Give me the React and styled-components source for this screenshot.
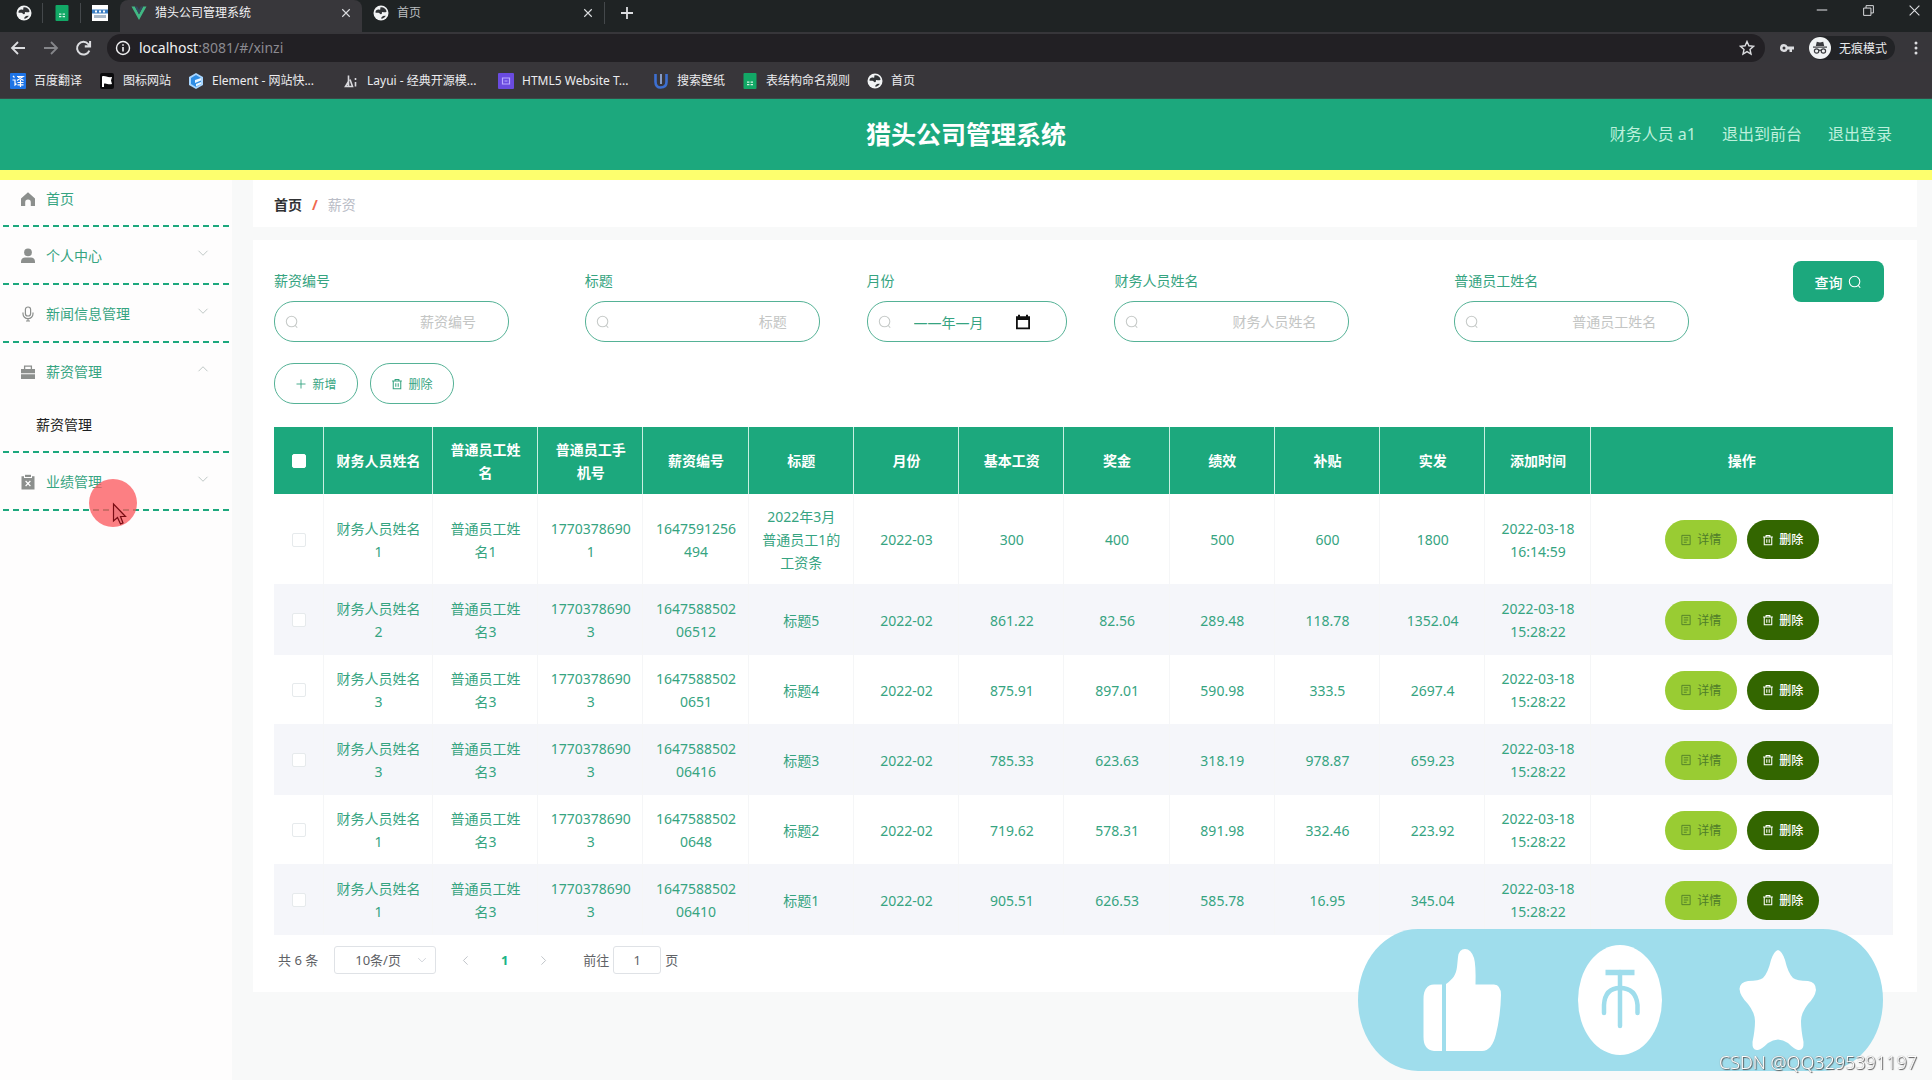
import React, { useState } from "react";
import styled, { createGlobalStyle, css } from "styled-components";

const GREEN = "#1ca87d";
const TEXT_GREEN = "#36a481";

const GlobalStyle = createGlobalStyle`
  * { box-sizing: border-box; }
  body {
    margin: 0;
    background: #f8f9f9;
    font-family: "Noto Sans", "Noto Sans CJK SC", sans-serif;
    font-size: 14px;
    color: #303133;
  }
  button, input, select { font: inherit; color: inherit; margin: 0; }
  button { cursor: pointer; }
`;

/* ---------- icons ---------- */

const Svg = ({ size = 14, box = 16, children, ...rest }) => (
  <svg width={size} height={size} viewBox={`0 0 ${box} ${box}`} fill="none" stroke="currentColor" strokeWidth="1.2" aria-hidden="true" {...rest}>
    {children}
  </svg>
);

const SearchIcon = ({ size }) => (
  <Svg size={size}>
    <circle cx="7.5" cy="7.5" r="6" />
    <path d="M11.6 11.8 L14 14.6" />
  </Svg>
);
const PlusIcon = ({ size = 12, width = 1.2 }) => (
  <Svg size={size} strokeWidth={width}><path d="M8 2v12M2 8h12" /></Svg>
);
const TrashIcon = ({ size = 12 }) => (
  <Svg size={size} strokeWidth="1.4"><path d="M1.5 4h13M5.5 4V2h5v2M3 4v10.2h10V4M6.4 7v4.6M9.6 7v4.6" /></Svg>
);
const DocIcon = ({ size = 12 }) => (
  <Svg size={size}><path d="M2.5 1.8h11v12.4h-11zM5 5h6M5 8h6M5 11h4" /></Svg>
);
const ChevronIcon = ({ dir = "down", size = 12 }) => {
  const d = { down: "M2 5l6 6 6-6", up: "M2 11l6-6 6 6", left: "M11 2L5 8l6 6", right: "M5 2l6 6-6 6" }[dir];
  return <Svg size={size}><path d={d} /></Svg>;
};
const HomeIcon = () => (
  <Svg size={16} fill="currentColor" stroke="none"><path d="M8 1.2 15 7.4V15h-4.2v-3.6a2.8 2.8 0 0 0-5.6 0V15H1V7.4z" /></Svg>
);
const UserIcon = () => (
  <Svg size={16} fill="currentColor" stroke="none"><circle cx="8" cy="4.4" r="3.9" /><path d="M1 15v-1.6C1 11 3 9.6 5 9.6h6c2 0 4 1.4 4 3.8V15z" /></Svg>
);
const MicIcon = () => (
  <Svg size={16}><rect x="5.4" y="1" width="5.2" height="9" rx="2.6" /><path d="M3 6.5v1.2a5 5 0 0 0 10 0V6.5M8 12.7V15M6 15h4" /></Svg>
);
const CaseIcon = () => (
  <Svg size={16} fill="currentColor" stroke="none"><path d="M1 5h14v4.200H1zM1 10.2h14V15H1z" /><path d="M4.6 5V2.200h6.8V5" fill="none" stroke="currentColor" strokeWidth="1.3" /></Svg>
);
const ClipIcon = () => (
  <Svg size={16} fill="currentColor" stroke="none">
    <path d="M1.5 2.2H4V4h8V2.2h2.5V15.5h-13z" /><path d="M5 .8h6V3H5z" />
    <path d="M5.6 7l4.8 5M10.4 7l-4.8 5" stroke="#fff" strokeWidth="1.2" />
  </Svg>
);
const CalendarIcon = () => (
  <Svg size={16} fill="#111" stroke="none"><path d="M1 2.2h2V.8h2v1.4h6V.8h2v1.4h2v13H1zM2.8 6v7.4h10.4V6z" fillRule="evenodd" /></Svg>
);
const GlobeIcon = () => (
  <Svg size={16} stroke="none"><circle cx="8" cy="8" r="7.5" fill="#f1f3f4" /><path d="M7.6 2.2c2.8-.4 5.6 1.4 6 4.2-1.6 1.8-3 .4-4.2.6-1.2.4.4 1.8-1.4 2.2-1 .2-1.4-1.2-2.6-1.4-.8-.2-2.2 0-3-.4.2-1.6 1-2.2 2-2.6 1.6-.6 2 .4 2.8-.4.6-.6-.4-1.2.4-2.2zM8.4 13.800c-.4-1.2.2-1.6 1-2.2.8-.8 2-.6 3.4-.8-1 1.8-2.4 2.8-4.4 3z" fill="#303336" /></Svg>
);
const SheetIcon = () => (
  <Svg size={16} stroke="none"><rect x="1.5" y="0" width="13" height="16" rx="1" fill="#12a866" /><path d="M5 8.500h2.400v1.200H5zM8.600 8.500H11v1.200H8.600zM5 11h2.400v1.200H5zM8.600 11H11v1.200H8.600z" fill="#d6f5e4" /></Svg>
);
const SiteIcon = () => (
  <Svg size={16} stroke="none"><rect width="16" height="16" fill="#fff" /><path d="M0 4.500h16v4H0z" fill="#3b7fc4" /><path d="M2 10h12v3H2z" fill="#a9b9c9" /><path d="M3 5.500h2v2H3zM7 5.500h2v2H7zM11 5.500h2v2h-2z" fill="#fff" /></Svg>
);
const VueIcon = () => (
  <Svg size={16} stroke="none"><path d="M.5 1.500h3.300L8 9.300l4.200-7.800h3.300L8 15z" fill="#41b883" /><path d="M3.800 1.500h2.400L8 5l1.800-3.500h2.400L8 9.300z" fill="#35495e" /></Svg>
);
const TranslateIcon = () => (
  <Svg size={16} stroke="#fff" strokeWidth="1.2"><rect width="16" height="16" rx="1" fill="#1e74e6" stroke="none" /><path d="M3 3l1.500 1.500M2.500 7H5v5l1.500-1.300M7 3.500h6L7 7.500M8 4l5.500 3.500M7.500 9.500h6M10.500 7v7M7.500 11.800h6" /></Svg>
);
const FlagIcon = () => (
  <Svg size={16} stroke="none"><rect x="1" width="14" height="16" rx="2" fill="#0b0b0d" /><path d="M3 3.500c3-1.600 4.500 1.400 10 .6l-1 3.400 1 3.600c-4 1-5.500-1.200-8-.4V14H3z" fill="#fff" /></Svg>
);
const ElementIcon = () => (
  <Svg size={16} stroke="none"><path d="M8 0l7 4v8l-7 4-7-4V4z" fill="#a8d6ff" /><path d="M8 2l5 3v6l-5 3-5-3V5z" fill="#2f8de4" /><path d="M7 7l6-2v2.500L7 10zM8 11l5-2v2l-5 2.500z" fill="#e9f5ff" /></Svg>
);
const LayuiIcon = () => (
  <Svg size={16} stroke="#d8d8dc" strokeWidth="1.6"><path d="M5.500 2.500v11M7 6.500l2.500 7H2.500l3-5M12.500 9v4.500M12.500 5v2" /></Svg>
);
const Html5Icon = () => (
  <Svg size={16} stroke="#b9a9ff" strokeWidth="1.2"><rect width="16" height="16" rx="1" fill="#6a4be0" stroke="none" /><path d="M4.500 5h7v6h-7zM6.500 8h3" /></Svg>
);
const WallIcon = () => (
  <Svg size={16} stroke="#3d6fd0" strokeWidth="2.6"><path d="M2.500 1v8c0 3.500 2 5.500 5 5.500s6-1.500 6-5.500V1" /><path d="M8 1v10" stroke="#9db6e6" strokeWidth="1.6" /></Svg>
);
const CloseIcon = ({ size = 10, width = 1.8 }) => (
  <Svg size={size} strokeWidth={width}><path d="M2 2l12 12M14 2L2 14" /></Svg>
);
const IncognitoIcon = () => (
  <Svg size={22} box={22} stroke="none"><circle cx="11" cy="11" r="11" fill="#f1f3f4" /><path d="M7.800 4.800l3.200.6 3.200-.6 1 4.200H6.800z" fill="#3a3b3f" /><path d="M4 9.500h14v1.200H4z" fill="#3a3b3f" /><g fill="none" stroke="#3a3b3f" strokeWidth="1.2"><circle cx="7.6" cy="14" r="2.2" /><circle cx="14.4" cy="14" r="2.2" /><path d="M9.800 13.600q1.200-.8 2.400 0" /></g></Svg>
);

/* ---------- browser frame ---------- */

const TabStrip = styled.div`
  display: flex;
  align-items: center;
  height: 32px;
  background: #1f2324;
  color: #c9cbce;
  font-size: 12px;
`;
const IconTab = styled.button`
  display: flex;
  align-items: center;
  justify-content: center;
  width: 38px;
  height: 20px;
  padding: 0;
  border: 0;
  border-right: ${(p) => (p.$last ? "0" : "1px solid #44484b")};
  background: none;
  margin-bottom: 7px;
`;
const PinnedTabs = styled.div`
  display: flex;
  padding: 0 0 0 5px;
  width: 120px;
`;
const Tab = styled.div`
  display: flex;
  align-items: center;
  gap: 8px;
  width: 242px;
  height: 32px;
  padding: 0 11px 7px;
  border-radius: 8px 8px 0 0;
  background: ${(p) => (p.$active ? "#38373b" : "transparent")};
  color: ${(p) => (p.$active ? "#f1f1f3" : "#b9bcbf")};
`;
const TabTitle = styled.span`
  flex: 1;
  line-height: 18px;
  white-space: nowrap;
`;
const ChromeButton = styled.button`
  display: flex;
  align-items: center;
  justify-content: center;
  width: ${(p) => p.$width || 16}px;
  height: 22px;
  padding: 0;
  border: 0;
  background: none;
  color: ${(p) => p.$color || "#dcdde0"};
`;
const TabActions = styled.div`
  display: flex;
  align-items: center;
  height: 22px;
  margin-bottom: 7px;
  padding-left: 10px;
  border-left: 1px solid #44484b;
`;
const WindowButtons = styled.div`
  display: flex;
  gap: 30px;
  margin-left: auto;
  margin-bottom: 12px;
  padding-right: 10px;
`;
const AddressBar = styled.div`
  display: flex;
  align-items: center;
  height: 30px;
  padding: 2px 0 0 2px;
  background: #37363a;
`;
const UrlBox = styled.div`
  display: flex;
  flex: 1;
  align-items: center;
  height: 28px;
  margin-left: 8px;
  margin-right: 12px;
  padding: 0 10px 0 8px;
  border-radius: 14px;
  background: #222024;
  color: #f1f1f3;
`;
const UrlText = styled.span`
  flex: 1;
  padding-left: 8px;
  font-size: 14px;
  line-height: 20px;
`;
const UrlRest = styled.span`
  color: #8b8a90;
`;
const Incognito = styled.div`
  display: flex;
  align-items: center;
  gap: 8px;
  height: 24px;
  margin: 0 5px 0 12px;
  padding-right: 8px;
  border-radius: 12px;
  background: #222326;
  color: #e8eaed;
  font-size: 12px;
`;
const Bookmarks = styled.nav`
  display: flex;
  align-items: center;
  gap: 17px;
  height: 37px;
  padding: 2px 10px 0;
  border-bottom: 1px solid #3a4a47;
  background: #38363a;
`;
const Bookmark = styled.a`
  display: flex;
  align-items: center;
  gap: 8px;
  color: #ececef;
  font-size: 12px;
  line-height: 18px;
  text-decoration: none;
  white-space: nowrap;
`;
const BookmarkLabel = styled.span`
  width: ${(p) => (p.$long ? "114px" : "auto")};
`;

const BOOKMARKS = [
  { label: "百度翻译", icon: <TranslateIcon /> },
  { label: "图标网站", icon: <FlagIcon /> },
  { label: "Element - 网站快...", icon: <ElementIcon />, long: true },
  { label: "Layui - 经典开源模...", icon: <LayuiIcon />, long: true },
  { label: "HTML5 Website T...", icon: <Html5Icon />, long: true },
  { label: "搜索壁纸", icon: <WallIcon /> },
  { label: "表结构命名规则", icon: <SheetIcon /> },
  { label: "首页", icon: <GlobeIcon /> },
];

function BrowserFrame() {
  return (
    <div>
      <TabStrip>
        <PinnedTabs>
          <IconTab aria-label="网页"><GlobeIcon /></IconTab>
          <IconTab aria-label="表格"><SheetIcon /></IconTab>
          <IconTab aria-label="站点" $last><SiteIcon /></IconTab>
        </PinnedTabs>
        <Tab $active>
          <VueIcon />
          <TabTitle>猎头公司管理系统</TabTitle>
          <ChromeButton aria-label="关闭标签页" $width={10}><CloseIcon /></ChromeButton>
        </Tab>
        <Tab>
          <GlobeIcon />
          <TabTitle>首页</TabTitle>
          <ChromeButton aria-label="关闭标签页" $width={10}><CloseIcon /></ChromeButton>
        </Tab>
        <TabActions>
          <ChromeButton aria-label="新标签页" $width={24}><PlusIcon size={16} width={1.8} /></ChromeButton>
        </TabActions>
        <WindowButtons>
          <ChromeButton aria-label="最小化"><Svg size={14}><path d="M2 8h12" /></Svg></ChromeButton>
          <ChromeButton aria-label="还原"><Svg size={13}><path d="M2 5h9v9H2zM5 5V2h9v9h-3" /></Svg></ChromeButton>
          <ChromeButton aria-label="关闭"><CloseIcon size={13} width={1.4} /></ChromeButton>
        </WindowButtons>
      </TabStrip>
      <AddressBar>
        <ChromeButton aria-label="后退" $width={32}><Svg size={16} strokeWidth="1.8"><path d="M15 8H2M8 2L2 8l6 6" /></Svg></ChromeButton>
        <ChromeButton aria-label="前进" $width={33} $color="#85868a"><Svg size={16} strokeWidth="1.8"><path d="M1 8h13M8 2l6 6-6 6" /></Svg></ChromeButton>
        <ChromeButton aria-label="刷新" $width={32}><Svg size={17} strokeWidth="1.9"><path d="M13.500 10a6 6 0 1 1-1-6.200L14 5.500M14.200 1v5H9.200" /></Svg></ChromeButton>
        <UrlBox>
          <Svg size={16} strokeWidth="1.4"><circle cx="8" cy="8" r="6.5" /><path d="M8 7v4.500M8 4.200v1.500" strokeWidth="1.6" /></Svg>
          <UrlText>localhost<UrlRest>:8081/#/xinzi</UrlRest></UrlText>
          <ChromeButton aria-label="收藏"><Svg size={16} strokeWidth="1.4"><path d="M8 1.500l1.900 4.300 4.600.5-3.500 3.100 1 4.600L8 11.600 4 14l1-4.600L1.500 6.300l4.600-.5z" /></Svg></ChromeButton>
        </UrlBox>
        <ChromeButton aria-label="密码" $width={20}><Svg size={16} fill="currentColor" stroke="none"><path d="M5 4a4 4 0 1 0 3.700 5.500H10.500V12h2.500V9.500h2V6.500H8.700A4 4 0 0 0 5 4zM5 6.500a1.500 1.500 0 1 1 0 3a1.500 1.500 0 0 1 0-3z" fillRule="evenodd" /></Svg></ChromeButton>
        <Incognito><IncognitoIcon />无痕模式</Incognito>
        <ChromeButton aria-label="菜单" $width={32}><Svg size={16} fill="currentColor" stroke="none"><circle cx="8" cy="3" r="1.5" /><circle cx="8" cy="8" r="1.5" /><circle cx="8" cy="13" r="1.5" /></Svg></ChromeButton>
      </AddressBar>
      <Bookmarks aria-label="书签">
        {BOOKMARKS.map((b) => (
          <Bookmark href="#" key={b.label}>
            {b.icon}
            <BookmarkLabel $long={b.long}>{b.label}</BookmarkLabel>
          </Bookmark>
        ))}
      </Bookmarks>
    </div>
  );
}

/* ---------- application shell ---------- */

const Shell = styled.div`
  display: flex;
  flex-direction: column;
  min-height: 100vh;
`;
const Header = styled.header`
  display: grid;
  grid-template-columns: 1fr auto 1fr;
  align-items: center;
  height: 81px;
  padding: 0 40px 1px;
  border-bottom: 10px solid #fdff6e;
  background: ${GREEN};
  color: #fff;
`;
const SystemTitle = styled.h1`
  grid-column: 2;
  margin: 0;
  font-size: 25px;
  line-height: 36px;
  font-weight: 700;
`;
const HeaderLinks = styled.div`
  display: flex;
  justify-content: flex-end;
  gap: 26px;
  color: #bdf0dc;
  font-size: 16px;
  line-height: 24px;
`;
const HeaderLink = styled.a`
  color: inherit;
  text-decoration: none;
`;
const Body = styled.div`
  display: flex;
  flex: 1;
`;
const Sidebar = styled.nav`
  flex: none;
  width: 232px;
  padding-right: 3px;
  background: #fefdfd;
`;
const MenuGroup = styled.div`
  padding-bottom: 2px;
  background: repeating-linear-gradient(270deg, ${GREEN} 0 6px, transparent 6px 10px) left bottom / 100% 2px no-repeat;
`;
const MenuItem = styled.button`
  display: flex;
  align-items: center;
  gap: 10px;
  width: 100%;
  height: ${(p) => (p.$first ? 45 : 56)}px;
  padding: ${(p) => (p.$first ? "0 20px 8px" : "2px 20px 0")};
  border: 0;
  background: none;
  color: ${TEXT_GREEN};
  text-align: left;
  line-height: 20px;

  > svg { color: #8c8f8d; }
`;
const MenuLabel = styled.span`
  flex: 1;
`;
const MenuArrow = styled.span`
  display: flex;
  padding-bottom: 6px;
  color: #b9c2bf;
`;
const SubItem = styled.a`
  display: block;
  height: 52px;
  padding-left: 36px;
  color: #1d1f22;
  line-height: 52px;
  text-decoration: none;
`;

const MENU = [
  { label: "首页", icon: <HomeIcon />, first: true },
  { label: "个人中心", icon: <UserIcon />, arrow: "down" },
  { label: "新闻信息管理", icon: <MicIcon />, arrow: "down" },
  { label: "薪资管理", icon: <CaseIcon />, arrow: "up", children: ["薪资管理"] },
  { label: "业绩管理", icon: <ClipIcon />, arrow: "down" },
];

/* ---------- content ---------- */

const Content = styled.main`
  display: flex;
  flex: 1;
  flex-direction: column;
  align-items: stretch;
  gap: 13px;
  min-width: 0;
  padding: 0 15px 0 21px;
`;
const Breadcrumb = styled.div`
  display: flex;
  align-items: center;
  gap: 10px;
  height: 47px;
  padding: 3px 21px 0;
  background: #fff;
  line-height: 20px;
`;
const CrumbHome = styled.a`
  color: #303133;
  font-weight: 700;
  text-decoration: none;
`;
const CrumbSlash = styled.span`
  color: #f0694f;
  font-weight: 700;
`;
const CrumbCurrent = styled.span`
  color: #b9bcc6;
`;
const Card = styled.section`
  padding: 21px 24px 18px 21px;
  background: #fff;
`;
const SearchForm = styled.form`
  display: grid;
  grid-template-columns: 311fr 282fr 248fr 340fr 339fr 100px;
`;
const Field = styled.div`
  padding-top: 10px;
`;
const FieldLabel = styled.label`
  display: block;
  margin-bottom: 10px;
  color: ${TEXT_GREEN};
  line-height: 20px;
`;
const InputShell = styled.div`
  display: flex;
  align-items: center;
  width: ${(p) => (p.$month ? 200 : 235)}px;
  height: 41px;
  padding: ${(p) => (p.$month ? "0 35px 0 10px" : "0 32px 0 10px")};
  border: 1px solid #55b296;
  border-radius: 20px;
  background: #fff;
  color: #c6cac8;
`;
const Input = styled.input`
  flex: 1;
  min-width: 0;
  padding: 0;
  border: 0;
  outline: 0;
  background: none;
  color: ${TEXT_GREEN};
  text-align: right;

  &::placeholder { color: #c3c5c4; opacity: 1; }
  ${(p) => p.$month && css`
    padding-left: 22px;
    text-align: left;
  `}
`;
const QueryButton = styled.button`
  display: flex;
  align-items: center;
  justify-content: center;
  gap: 6px;
  width: 91px;
  height: 41px;
  padding: 0;
  border: 0;
  border-radius: 8px;
  background: ${GREEN};
  color: #fff;
  font-size: 14px;
  font-weight: 500;
`;
const Toolbar = styled.div`
  display: flex;
  gap: 12px;
  padding: 21px 0 23px;
`;
const OutlineButton = styled.button`
  display: flex;
  align-items: center;
  justify-content: center;
  gap: 5px;
  width: 84px;
  height: 41px;
  padding: 0;
  border: 1px solid #55b296;
  border-radius: 20px;
  background: #fff;
  color: ${TEXT_GREEN};
  font-size: 12px;
`;

const Table = styled.table`
  width: 100%;
  table-layout: fixed;
  border-collapse: separate;
  border-spacing: 0;
  color: ${TEXT_GREEN};
  line-height: 23px;
  text-align: center;
`;
const Col = styled.col`
  width: ${(p) => p.$width};
`;
const Th = styled.th`
  height: 67px;
  padding: 0 11px 0 12px;
  border-right: 1px solid #c9efe1;
  background: ${GREEN};
  color: #fff;
  font-weight: 700;
  word-break: break-all;

  &:last-child { border-right-color: ${GREEN}; }
`;
const Row = styled.tr`
  height: 70px;
  background: ${(p) => (p.$striped ? "#f5f6fa" : "#fff")};
`;
const Td = styled.td`
  padding: 11px 11px 10px 12px;
  border-right: 1px solid #f5f6f7;
  border-bottom: 1px solid #f5f6fa;
  word-break: break-all;
`;
const Check = styled.input.attrs({ type: "checkbox" })`
  display: block;
  width: 14px;
  height: 14px;
  margin: 0 auto;
  border: 1px solid ${(p) => (p.$head ? "#fff" : "#e6eaec")};
  border-radius: 2px;
  background: #fff;
  appearance: none;
`;
const Actions = styled.div`
  display: flex;
  justify-content: center;
  gap: 10px;
`;
const ActionButton = styled.button`
  display: flex;
  align-items: center;
  justify-content: center;
  gap: 5px;
  width: 72px;
  height: 39px;
  padding: 0;
  border: 0;
  border-radius: 20px;
  background: ${(p) => (p.$danger ? "#336600" : "#99cc33")};
  color: ${(p) => (p.$danger ? "#fff" : "#4f7d2a")};
  font-size: 12px;
  font-weight: ${(p) => (p.$danger ? 500 : 400)};
`;

const Pagination = styled.div`
  display: flex;
  align-items: center;
  padding: 11px 4px 0;
  color: #606266;
  font-size: 13px;
  line-height: 28px;
`;
const SizeSelect = styled.div`
  display: flex;
  align-items: center;
  width: 102px;
  height: 28px;
  margin: 0 10px 0 16px;
  padding-right: 8px;
  border: 1px solid #dfe2e6;
  border-radius: 3px;
  color: #c0c4cc;

  select {
    flex: 1;
    min-width: 0;
    padding: 0 0 0 20px;
    border: 0;
    outline: 0;
    background: none;
    color: #606266;
    appearance: none;
  }
`;
const PageButton = styled.button`
  display: flex;
  align-items: center;
  justify-content: center;
  width: 39px;
  height: 28px;
  padding: 0;
  border: 0;
  background: none;
  color: ${(p) => (p.$current ? "#1ab486" : "#b4b8bf")};
  font-weight: 700;
`;
const JumpLabel = styled.label`
  display: flex;
  align-items: center;
  gap: 4px;
  margin-left: 20px;
`;
const JumpInput = styled.input`
  width: 48px;
  height: 28px;
  padding: 0;
  border: 1px solid #dfe2e6;
  border-radius: 3px;
  background: #fff;
  text-align: center;
`;

/* ---------- overlays ---------- */

const Reactions = styled.div`
  position: fixed;
  right: 49px;
  bottom: 9px;
  line-height: 0;
`;
const Watermark = styled.div`
  position: fixed;
  right: 15px;
  bottom: 5px;
  color: #fff;
  font-size: 18px;
  line-height: 26px;
  font-weight: 300;
  text-shadow: 1px 1px 1px #555, 0 0 1px #777;
`;
const Pointer = styled.div`
  position: fixed;
  left: 89px;
  top: 479px;
  line-height: 0;
  pointer-events: none;
`;

const FIELDS = [
  { id: "salaryNo", label: "薪资编号" },
  { id: "title", label: "标题" },
  { id: "month", label: "月份", month: true },
  { id: "financeName", label: "财务人员姓名" },
  { id: "staffName", label: "普通员工姓名" },
];

const COLUMNS = ["财务人员姓名", "普通员工姓名", "普通员工手机号", "薪资编号", "标题", "月份", "基本工资", "奖金", "绩效", "补贴", "实发", "添加时间"];

const ROWS = [
  ["财务人员姓名1", "普通员工姓名1", "17703786901", "1647591256494", "2022年3月普通员工1的工资条", "2022-03", "300", "400", "500", "600", "1800", "2022-03-18 16:14:59"],
  ["财务人员姓名2", "普通员工姓名3", "17703786903", "164758850206512", "标题5", "2022-02", "861.22", "82.56", "289.48", "118.78", "1352.04", "2022-03-18 15:28:22"],
  ["财务人员姓名3", "普通员工姓名3", "17703786903", "16475885020651", "标题4", "2022-02", "875.91", "897.01", "590.98", "333.5", "2697.4", "2022-03-18 15:28:22"],
  ["财务人员姓名3", "普通员工姓名3", "17703786903", "164758850206416", "标题3", "2022-02", "785.33", "623.63", "318.19", "978.87", "659.23", "2022-03-18 15:28:22"],
  ["财务人员姓名1", "普通员工姓名3", "17703786903", "16475885020648", "标题2", "2022-02", "719.62", "578.31", "891.98", "332.46", "223.92", "2022-03-18 15:28:22"],
  ["财务人员姓名1", "普通员工姓名3", "17703786903", "164758850206410", "标题1", "2022-02", "905.51", "626.53", "585.78", "16.95", "345.04", "2022-03-18 15:28:22"],
];

function SalaryTable() {
  return (
    <Table>
      <colgroup>
        <Col $width="50px" />
        <Col $width="109px" />
        {COLUMNS.slice(1).map((c) => <Col key={c} $width="6.5%" />)}
        <Col $width="auto" />
      </colgroup>
      <thead>
        <tr>
          <Th><Check $head aria-label="全选" /></Th>
          {COLUMNS.map((c) => <Th key={c}>{c}</Th>)}
          <Th>操作</Th>
        </tr>
      </thead>
      <tbody>
        {ROWS.map((row, i) => (
          <Row key={row[3]} $striped={i % 2 === 1}>
            <Td><Check aria-label={`选择 ${row[3]}`} /></Td>
            {row.map((cell, j) => <Td key={j}>{cell}</Td>)}
            <Td>
              <Actions>
                <ActionButton type="button"><DocIcon />详情</ActionButton>
                <ActionButton type="button" $danger><TrashIcon />删除</ActionButton>
              </Actions>
            </Td>
          </Row>
        ))}
      </tbody>
    </Table>
  );
}

export default function App() {
  const [month, setMonth] = useState("——年—月");
  const [page, setPage] = useState("1");
  return (
    <Shell>
      <GlobalStyle />
      <BrowserFrame />
      <Header>
        <SystemTitle>猎头公司管理系统</SystemTitle>
        <HeaderLinks>
          <span>财务人员 a1</span>
          <HeaderLink href="#">退出到前台</HeaderLink>
          <HeaderLink href="#">退出登录</HeaderLink>
        </HeaderLinks>
      </Header>
      <Body>
        <Sidebar aria-label="主菜单">
          {MENU.map((m) => (
            <MenuGroup key={m.label}>
              <MenuItem $first={m.first}>
                {m.icon}
                <MenuLabel>{m.label}</MenuLabel>
                {m.arrow && <MenuArrow><ChevronIcon dir={m.arrow} /></MenuArrow>}
              </MenuItem>
              {m.children && m.children.map((c) => <SubItem href="#" key={c}>{c}</SubItem>)}
            </MenuGroup>
          ))}
        </Sidebar>
        <Content>
          <Breadcrumb>
            <CrumbHome href="#">首页</CrumbHome>
            <CrumbSlash>/</CrumbSlash>
            <CrumbCurrent>薪资</CrumbCurrent>
          </Breadcrumb>
          <Card>
            <SearchForm onSubmit={(e) => e.preventDefault()}>
              {FIELDS.map((f) => (
                <Field key={f.id}>
                  <FieldLabel htmlFor={f.id}>{f.label}</FieldLabel>
                  <InputShell $month={f.month}>
                    <SearchIcon size={14} />
                    {f.month ? (
                      <>
                        <Input id={f.id} $month value={month} onChange={(e) => setMonth(e.target.value)} />
                        <CalendarIcon />
                      </>
                    ) : (
                      <Input id={f.id} placeholder={f.label} />
                    )}
                  </InputShell>
                </Field>
              ))}
              <QueryButton type="submit">查询<SearchIcon size={14} /></QueryButton>
            </SearchForm>
            <Toolbar>
              <OutlineButton type="button"><PlusIcon />新增</OutlineButton>
              <OutlineButton type="button"><TrashIcon />删除</OutlineButton>
            </Toolbar>
            <SalaryTable />
            <Pagination>
              <span>共 6 条</span>
              <SizeSelect>
                <select aria-label="每页条数" defaultValue="10">
                  <option value="10">10条/页</option>
                </select>
                <ChevronIcon size={10} />
              </SizeSelect>
              <PageButton aria-label="上一页"><ChevronIcon dir="left" size={11} /></PageButton>
              <PageButton $current>1</PageButton>
              <PageButton aria-label="下一页"><ChevronIcon dir="right" size={11} /></PageButton>
              <JumpLabel>
                前往
                <JumpInput value={page} onChange={(e) => setPage(e.target.value)} />
                页
              </JumpLabel>
            </Pagination>
          </Card>
        </Content>
      </Body>

      <Reactions>
        <svg width="525" height="142" viewBox="0 0 525 142" aria-hidden="true">
          <rect width="525" height="142" rx="60" ry="71" fill="#9fddec" />
          <g fill="#fff">
            <path d="M84 55.5V122H76Q65.5 121 65.5 108V70Q65.5 56 76 55.500z" />
            <path d="M88 55C95 50 98 46 99 38L100 28Q101 20 107 20Q113 20 116 29Q118 36 117.5 55.500H136Q143 56 143 66Q142.5 87 138 105Q134 122 124 122H88z" />
            <ellipse cx="262" cy="71" rx="42" ry="55" />
            <path d="M420 21Q424 22 427 31Q430 44 435 49Q439 52 450 52Q458 53 458 61Q457 68 450 75Q443 84 443 92Q443 101 445.5 113Q446 122 440 121Q436 120 430 114Q420 107 410 114Q404 120 400 121Q394 122 394.5 113Q397 101 397 92Q397 84 390 75Q382 67 381.5 60Q382 53 390 52Q401 52 405 49Q410 44 413 31Q416 22 420 21z" />
          </g>
          <g fill="none" stroke="#9fddec">
            <path d="M247.5 43.5H276.5" strokeWidth="5.5" />
            <path d="M262 43V97" strokeWidth="4.5" strokeLinecap="round" />
            <path d="M246 84V76Q247 59 262 59Q278 59 279.5 76V84" strokeWidth="4.5" strokeLinecap="round" />
          </g>
        </svg>
      </Reactions>
      <Watermark>CSDN @QQ3295391197</Watermark>
      <Pointer>
        <svg width="48" height="50" viewBox="0 0 48 50" aria-hidden="true">
          <circle cx="24" cy="24" r="24" fill="#fb5b60" fillOpacity="0.78" />
          <path d="M24.5 25V42L28.5 38.5L31.5 45L34 44L31.5 37.500H36.500z" fill="#f0757a" stroke="#7a0d14" strokeWidth="1.2" />
        </svg>
      </Pointer>
    </Shell>
  );
}
